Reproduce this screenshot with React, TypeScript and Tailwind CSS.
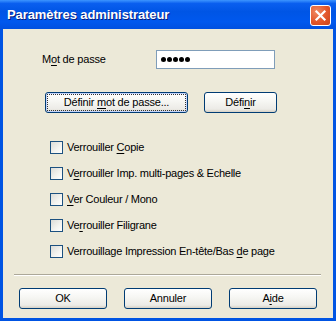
import React from 'react';

const font = "font-['Liberation_Sans',Arial,sans-serif]";

const Key = ({ children }: { children: React.ReactNode }) => <span className="underline underline-offset-[2px]">{children}</span>;

interface BtnProps {
  w: string;
  children: React.ReactNode;
  focused?: boolean;
}

const XpButton: React.FC<BtnProps> = ({ w, children, focused }) => (
  <button
    className={`${w} h-[21px] rounded-[3px] border border-[#003c74] bg-[linear-gradient(to_bottom,#ffffff_0%,#f7f7f4_40%,#ecebe6_85%,#d6d0c5_100%)] text-[11px] tracking-[-0.2px] text-black leading-none flex items-center justify-center p-[2px] ${
      focused ? 'shadow-[inset_0_0_0_1px_#c3d4fc]' : ''
    }`}
  >
    <span className={`w-full h-full flex items-center justify-center ${focused ? 'outline outline-1 outline-dotted outline-[#333]' : ''}`}>
      <span>{children}</span>
    </span>
  </button>
);

const CheckRow = ({ children }: { children: React.ReactNode }) => (
  <label className="flex items-center h-[13px]">
    <span className="w-[13px] h-[13px] border border-[#1c5180] bg-[linear-gradient(135deg,#dcdcd7_0%,#f4f4f0_60%,#ffffff_100%)] shrink-0" />
    <span className="ml-[4px] text-[11px] tracking-[-0.25px] text-black leading-none">{children}</span>
  </label>
);

export default function App() {
  return (
    <div className={`w-[336px] h-[321px] flex flex-col bg-[#0054e3] overflow-hidden ${font}`}>
      <div className="h-[29px] shrink-0 flex items-center justify-between pl-[7px] pr-[5px] bg-[linear-gradient(to_bottom,#3d95ff_0%,#0a5fef_12%,#0055e5_40%,#0058ee_75%,#0050e0_100%)]">
        <span className="text-white font-bold text-[13px] tracking-[-0.1px] [text-shadow:1px_1px_0_#0a1d7a] mt-[1px]">
          Paramètres administrateur
        </span>
        <div className="w-[21px] h-[21px] rounded-[3px] border border-white bg-[radial-gradient(circle_at_30%_30%,#f08a63_0%,#e2562a_55%,#c9431a_100%)] flex items-center justify-center mt-[1px]">
          <svg width="13" height="13" viewBox="0 0 13 13">
            <path d="M2.5 2.5 L10.5 10.5 M10.5 2.5 L2.5 10.5" stroke="white" strokeWidth="2.2" strokeLinecap="square" />
          </svg>
        </div>
      </div>
      <div className="flex-1 mx-[3px] mb-[3px] bg-[#ece9d8] flex flex-col">
        <div className="flex items-center mt-[21px] h-[19px]">
          <span className="ml-[39px] w-[114px] text-[11px] tracking-[-0.2px] text-black leading-none">
            M<Key>o</Key>t de passe
          </span>
          <div className="w-[119px] h-[19px] border border-[#7f9db9] bg-white flex items-center pl-[4px] gap-[1px]">
            {[0, 1, 2, 3, 4].map(i => (
              <span key={i} className="w-[5px] h-[5px] rounded-full bg-black" />
            ))}
          </div>
        </div>
        <div className="flex mt-[23px] ml-[42px]">
          <XpButton w="w-[143px]" focused>
            Définir <Key>m</Key>ot de passe...
          </XpButton>
          <div className="ml-[16px]">
            <XpButton w="w-[73px]">
              Défi<Key>n</Key>ir
            </XpButton>
          </div>
        </div>
        <div className="flex flex-col gap-[13px] mt-[28px] ml-[47px]">
          <CheckRow>Verrouiller <Key>C</Key>opie</CheckRow>
          <CheckRow>V<Key>e</Key>rrouiller Imp. multi-pages &amp; Echelle</CheckRow>
          <CheckRow><Key>V</Key>er Couleur / Mono</CheckRow>
          <CheckRow>Ve<Key>r</Key>rouiller Filigrane</CheckRow>
          <CheckRow>Verrouillage Impression En-tête/Bas <Key>d</Key>e page</CheckRow>
        </div>
        <div className="mt-[16px] ml-[11px] w-[307px] h-[2px] border-t border-[#aca899] border-b border-b-white" />
        <div className="flex mt-[12px] ml-[16px] gap-[17px]">
          <XpButton w="w-[88px]">OK</XpButton>
          <XpButton w="w-[88px]">Annuler</XpButton>
          <XpButton w="w-[88px]">A<Key>i</Key>de</XpButton>
        </div>
      </div>
    </div>
  );
}
